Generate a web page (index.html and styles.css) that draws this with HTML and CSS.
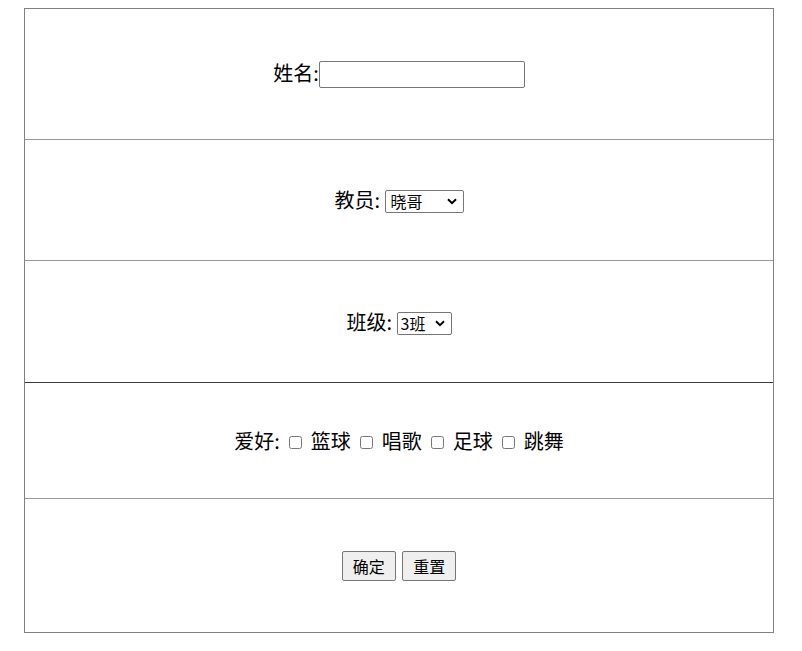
FILE: index.html
```html
<!DOCTYPE html>
<html lang="zh-CN">
<head>
<meta charset="utf-8">
<title>表单</title>
<link rel="stylesheet" href="styles.css">
</head>
<body>
<form class="sheet">
  <div class="row row-name">
    <label class="field">姓名:<input class="text-input" type="text"></label>
  </div>
  <div class="row row-teacher">
    <label class="field">教员: <select class="select select-teacher"><option>晓哥</option><option>老师</option></select></label>
  </div>
  <div class="row row-class">
    <label class="field">班级: <select class="select select-class"><option>3班</option><option>1班</option></select></label>
  </div>
  <div class="row row-hobby">
    <div class="field">爱好: <input type="checkbox" class="box"> 篮球 <input type="checkbox" class="box"> 唱歌 <input type="checkbox" class="box"> 足球 <input type="checkbox" class="box"> 跳舞</div>
  </div>
  <div class="row row-actions">
    <div class="field"><button type="button" class="btn">确定</button> <button type="reset" class="btn">重置</button></div>
  </div>
</form>
</body>
</html>
```
FILE: styles.css
```css
html, body {
  margin: 0;
  padding: 0;
  background: #ffffff;
}
body {
  padding: 8px 0 0 24px;
  font-family: "Noto Sans CJK SC", "Noto Sans", "Liberation Sans", sans-serif;
  color: #000;
}
.sheet {
  box-sizing: border-box;
  width: 750px;
  border: 1px solid #808080;
  display: flex;
  flex-direction: column;
  margin: 0;
}
.row {
  box-sizing: border-box;
  display: flex;
  align-items: center;
  justify-content: center;
  border-top: 1px solid #999999;
}
.row-name { height: 130px; border-top: none; }
.row-teacher { height: 121px; }
.row-class { height: 122px; }
.row-hobby { height: 116px; border-top: 1px solid #3a3a3a; }
.row-actions { height: 134px; }

.field {
  display: block;
  font-size: 20px;
  line-height: 26px;
  text-align: center;
  white-space: nowrap;
}
.text-input {
  box-sizing: border-box;
  width: 206px;
  height: 27px;
  margin: 0;
  border: 1px solid #767676;
  border-radius: 2px;
  padding: 1px 2px;
  font-size: 16px;
  vertical-align: 1px;
}
.select {
  box-sizing: border-box;
  height: 23px;
  margin: 0;
  font-size: 16px;
  line-height: 19px;
  font-family: "Noto Sans CJK SC", "Liberation Sans", sans-serif;
  border: 1px solid #767676;
  border-radius: 2px;
  color: #000;
  padding: 0 0 0 5px;
  -webkit-appearance: none;
  appearance: none;
  background-color: #fff;
  background-image: url("data:image/svg+xml;utf8,<svg xmlns='http://www.w3.org/2000/svg' width='10' height='7' viewBox='0 0 10 7'><path d='M1 1.2 L5 5.2 L9 1.2' fill='none' stroke='black' stroke-width='2'/></svg>");
  background-repeat: no-repeat;
  background-size: 10px 7px;
  background-position: right 6px center;
  vertical-align: 0;
}
.select-teacher { width: 79px; }
.select-class { width: 55px; padding-left: 3px; }
.box {
  width: 13px;
  height: 13px;
  margin: 3px 4px 3px 5px;
  vertical-align: 0;
}
.btn {
  box-sizing: border-box;
  width: 54px;
  height: 30px;
  margin: 0 1px;
  padding: 0;
  font-size: 16px;
  line-height: 20px;
  font-family: "Noto Sans CJK SC", "Liberation Sans", sans-serif;
  background: #efefef;
  border: 1px solid #767676;
  border-radius: 2px;
  color: #000;
}
```
